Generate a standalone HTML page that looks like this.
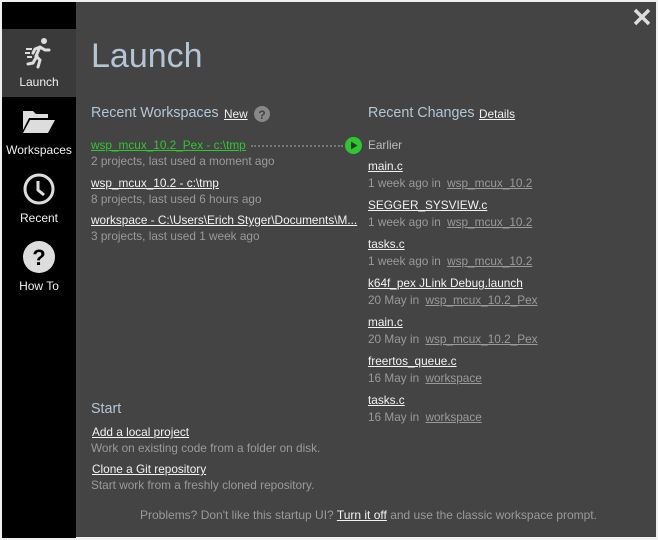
<!DOCTYPE html>
<html><head><style>
body{margin:0;width:658px;height:540px;background:#f0f0f0;font-family:"Liberation Sans",sans-serif;overflow:hidden;position:relative}
#main{position:absolute;left:2px;top:2px;width:654px;height:535px;background:#444444}
#side{position:absolute;left:2px;top:2px;width:74px;height:536px;background:#000}
.it{position:absolute;left:2px;width:74px;text-align:center;color:#f0f0f0;font-size:12px}
.t{position:absolute;white-space:nowrap;font-size:11.8px;line-height:16px}
.h{color:#b4c6d6;font-size:14.3px}
.l{color:#f2f2f2;text-decoration:underline}
.g{color:#9a9a9a}
.gl{color:#9a9a9a;text-decoration:underline;margin-left:3px}
</style></head><body>
<div id="main"></div>
<div id="side"></div>
<div class="it" style="top:29px;height:68px;background:#3a3a3a"></div>
<svg style="position:absolute;left:24px;top:36px" width="30" height="34" viewBox="0 0 30 34" fill="#ddd" stroke="#ddd">
<circle cx="20" cy="5" r="3" stroke="none"/>
<path d="M16 11 L12 20 L16 24 L14 31 M13 20 L9 27 L4 28 M16 11 L21 14 L25 14 M16 11 L11 13 L9 17" fill="none" stroke-width="3" stroke-linecap="round"/>
<path d="M2 13h6M1 17h5M3 21h5" stroke-width="2"/>
</svg>
<div class="it" style="top:75px">Launch</div>
<svg style="position:absolute;left:22px;top:108px" width="34" height="26" viewBox="0 0 34 26" fill="#ddd"><path d="M1 3h10l3 3h12v4H7L1 22z"/><path d="M8 12h25l-7 13H1z"/></svg>
<div class="it" style="top:143px">Workspaces</div>
<svg style="position:absolute;left:23px;top:173px" width="32" height="32" viewBox="0 0 32 32" fill="none" stroke="#ddd" stroke-width="3"><circle cx="16" cy="16" r="14"/><path d="M15 8v9l6 5"/></svg>
<div class="it" style="top:211px">Recent</div>
<svg style="position:absolute;left:23px;top:241px" width="32" height="32" viewBox="0 0 32 32"><circle cx="16" cy="16" r="16" fill="#ddd"/><text x="16" y="24" text-anchor="middle" font-family="Liberation Sans" font-weight="bold" font-size="22" fill="#000">?</text></svg>
<div class="it" style="top:279px">How To</div>
<svg style="position:absolute;left:633px;top:8px" width="18" height="18" viewBox="0 0 18 18" stroke="#ddd" stroke-width="3.5"><path d="M2 2L16 16M16 2L2 16"/></svg>
<div class="t" style="left:91px;top:36px;font-size:34px;line-height:40px;color:#b4c6d6">Launch</div>
<div class="t h" style="left:91px;top:104px;line-height:18px">Recent Workspaces</div>
<div class="t l" style="left:224px;top:106px">New</div>
<svg style="position:absolute;left:254px;top:106px" width="16" height="16"><circle cx="8" cy="8" r="8" fill="#888"/><text x="8" y="13" text-anchor="middle" font-family="Liberation Sans" font-weight="bold" font-size="12" fill="#444">?</text></svg>
<div class="t" style="left:91px;top:137px;color:#2ec82e;text-decoration:underline">wsp_mcux_10.2_Pex - c:\tmp</div>
<div style="position:absolute;left:251px;top:145px;width:92px;border-top:2px dotted #777"></div>
<svg style="position:absolute;left:345px;top:137px" width="17" height="17"><circle cx="8.5" cy="8.5" r="8.5" fill="#2ec82e"/><path d="M6 4.5L12.5 8.5L6 12.5z" fill="#333"/></svg>
<div class="t g" style="left:91px;top:153px">2 projects, last used a moment ago</div>
<div class="t l" style="left:91px;top:175px">wsp_mcux_10.2 - c:\tmp</div>
<div class="t g" style="left:91px;top:191px">8 projects, last used 6 hours ago</div>
<div class="t l" style="left:91px;top:212px">workspace - C:\Users\Erich Styger\Documents\M...</div>
<div class="t g" style="left:91px;top:228px">3 projects, last used 1 week ago</div>
<div class="t h" style="left:368px;top:104px;line-height:18px">Recent Changes</div>
<div class="t l" style="left:479px;top:106px">Details</div>
<div class="t g" style="left:368px;top:137px;color:#bbb">Earlier</div>
<div class="t l" style="left:368px;top:158px">main.c</div>
<div class="t g" style="left:368px;top:175px">1 week ago in <span class="gl">wsp_mcux_10.2</span></div>
<div class="t l" style="left:368px;top:197px">SEGGER_SYSVIEW.c</div>
<div class="t g" style="left:368px;top:214px">1 week ago in <span class="gl">wsp_mcux_10.2</span></div>
<div class="t l" style="left:368px;top:236px">tasks.c</div>
<div class="t g" style="left:368px;top:253px">1 week ago in <span class="gl">wsp_mcux_10.2</span></div>
<div class="t l" style="left:368px;top:275px">k64f_pex JLink Debug.launch</div>
<div class="t g" style="left:368px;top:292px">20 May in <span class="gl">wsp_mcux_10.2_Pex</span></div>
<div class="t l" style="left:368px;top:314px">main.c</div>
<div class="t g" style="left:368px;top:331px">20 May in <span class="gl">wsp_mcux_10.2_Pex</span></div>
<div class="t l" style="left:368px;top:353px">freertos_queue.c</div>
<div class="t g" style="left:368px;top:370px">16 May in <span class="gl">workspace</span></div>
<div class="t l" style="left:368px;top:392px">tasks.c</div>
<div class="t g" style="left:368px;top:409px">16 May in <span class="gl">workspace</span></div>
<div class="t h" style="left:91px;top:400px;line-height:18px">Start</div>
<div class="t l" style="left:92px;top:424px">Add a local project</div>
<div class="t g" style="left:91px;top:440px">Work on existing code from a folder on disk.</div>
<div class="t l" style="left:92px;top:461px">Clone a Git repository</div>
<div class="t g" style="left:91px;top:477px">Start work from a freshly cloned repository.</div>
<div class="t g" style="left:140px;top:507px;font-size:12px">Problems? Don't like this startup UI? <span class="l">Turn it off</span> and use the classic workspace prompt.</div>
</body></html>
